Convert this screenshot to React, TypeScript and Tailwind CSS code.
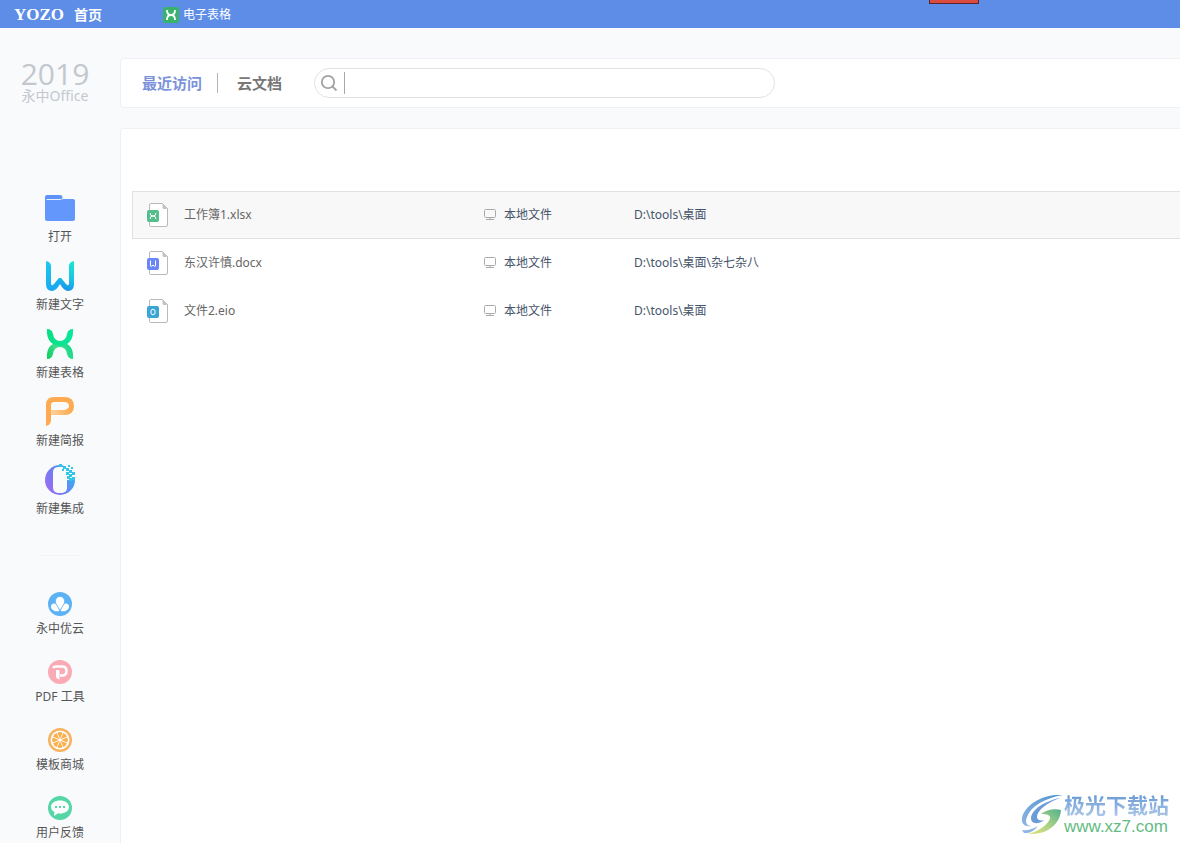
import type { ReactNode } from "react";

function FolderIcon() {
  return (
    <svg width="32" height="32" viewBox="0 0 32 32" aria-hidden="true">
      <path d="M1 5a2 2 0 0 1 2-2h13a2.500 2.500 0 0 1 2.500 2.500V9H1z" fill="#5f93fb" />
      <path d="M2 8h27a2 2 0 0 1 2 2v17a2 2 0 0 1-2 2H3a2 2 0 0 1-2-2V9a1 1 0 0 1 1-1z" fill="#6497fc" />
      <path d="M19 7h10a2 2 0 0 1 2 2v3H17z" fill="#6497fc" />
      <path d="M2.500 7.500h14.500l2-2" stroke="#e6eefe" strokeWidth="1" fill="none" />
    </svg>
  );
}

function WriterIcon() {
  return (
    <svg width="32" height="32" viewBox="0 0 32 32" fill="none" aria-hidden="true">
      <defs>
        <linearGradient id="writerLeft" gradientUnits="userSpaceOnUse" x1="4" y1="2" x2="14" y2="30">
          <stop offset="0" stopColor="#1cc9ea" />
          <stop offset="1" stopColor="#19a5f4" />
        </linearGradient>
        <linearGradient id="writerRight" gradientUnits="userSpaceOnUse" x1="27" y1="2" x2="18" y2="30">
          <stop offset="0" stopColor="#17e6d2" />
          <stop offset="0.600" stopColor="#1bbfe6" />
          <stop offset="1" stopColor="#1590ee" />
        </linearGradient>
      </defs>
      <path d="M2 1q5 1 5 5v17q0 4 3 1l4-5q2-2 4 0l-2 5q-4 7-8 7-6 0-6-7z" fill="url(#writerLeft)" />
      <path d="M30 1q-5 1-5 5v17q0 4-3 1l-4-5q-2-2-4 0l2 5q4 7 8 7 6 0 6-7z" fill="url(#writerRight)" />
    </svg>
  );
}

function SheetIcon() {
  return (
    <svg width="32" height="32" viewBox="0 0 32 32" fill="none" aria-hidden="true">
      <defs>
        <linearGradient id="sheetTop" gradientUnits="userSpaceOnUse" x1="3" y1="0" x2="29" y2="0">
          <stop offset="0" stopColor="#08df82" />
          <stop offset="1" stopColor="#08e79a" />
        </linearGradient>
        <linearGradient id="sheetBottom" gradientUnits="userSpaceOnUse" x1="3" y1="30" x2="28" y2="16">
          <stop offset="0" stopColor="#05d05f" />
          <stop offset="0.500" stopColor="#46dc91" />
          <stop offset="1" stopColor="#0bd988" />
        </linearGradient>
      </defs>
      <path d="M3 31v-5q1-11 13-12 12 1 13 12v5q-5 0-6-5-1-7-7-7t-7 7q-1 5-6 5z" fill="url(#sheetBottom)" />
      <path d="M3 1v4q1 12 13 13 12-1 13-13V1q-5 0-6 5-1 7-7 7T9 6Q8 1 3 1z" fill="url(#sheetTop)" />
    </svg>
  );
}

function SlidesIcon() {
  return (
    <svg width="32" height="32" viewBox="0 0 32 32" aria-hidden="true">
      <defs>
        <linearGradient id="slides" x1="0" y1="0" x2="1" y2="0">
          <stop offset="0" stopColor="#ffd19a" />
          <stop offset="1" stopColor="#fbac54" />
        </linearGradient>
      </defs>
      <path d="M2 9q0-8 8-8h10q10 0 10 9t-10 9H8v-5h12q5 0 5-4t-5-4H10q-3 0-3 3v15q0 5-5 6z" fill="#fdaa50" />
      <path d="M7 14h13q3 0 4-2l3 4q-3 3-7 3H7z" fill="url(#slides)" />
    </svg>
  );
}

const pixels = [
  [15, 0, 3], [19, 2, 3], [24, 1, 2], [22, 4, 3], [27, 3, 2], [18, 5, 2], [25, 6, 3], [28, 8, 3],
  [22, 8, 3], [25, 10, 3], [23, 12, 3], [28, 13, 3], [25, 14, 3],
];

function SuiteIcon() {
  return (
    <svg width="32" height="32" viewBox="0 0 32 32" aria-hidden="true">
      <defs>
        <linearGradient id="suite" gradientUnits="userSpaceOnUse" x1="1" y1="28" x2="31" y2="12">
          <stop offset="0" stopColor="#a56bf0" />
          <stop offset="0.500" stopColor="#6d7df4" />
          <stop offset="1" stopColor="#34b4f2" />
        </linearGradient>
      </defs>
      <path
        fillRule="evenodd"
        d="M16 1A15 15 0 1 0 31 16h-8v8c0 3-2 5-7 5s-7-2-7-6V9c0-5 2-6 7-6h4V1.800z"
        fill="url(#suite)"
      />
      {pixels.map(([x, y, s]) => (
        <rect key={`${x}-${y}`} x={x} y={y} width={s} height={s} fill="#32c7e9" />
      ))}
    </svg>
  );
}

function CloudIcon() {
  return (
    <svg width="24" height="24" viewBox="0 0 24 24" aria-hidden="true">
      <circle cx="12" cy="12" r="12" fill="#5cb2f5" />
      <path d="M11.500 19c-4.500 1-8.500-1-8.500-4.500s4-4 6-1.500z M12.500 19c4.500 1 8.500-1 8.500-4.500s-4-4-6-1.500z" fill="#fff" />
      <path d="M12 4.500c4 0 5.500 4 4 7.500l-4 6.500L8 12c-1.500-3.500 0-7.500 4-7.500z" fill="#fff" stroke="#5cb2f5" strokeWidth="0.800" />
    </svg>
  );
}

function PdfIcon() {
  return (
    <svg width="24" height="24" viewBox="0 0 24 24" fill="none" aria-hidden="true">
      <circle cx="12" cy="12" r="12" fill="#faaab4" />
      <path d="M5 8q1-1.500 3-1.500h6q4.500 0 4.500 4.500T14 15.500h-2" stroke="#fff" strokeWidth="2.500" />
      <path d="M8 10h3.500v9.500Q8 19 8 16z" fill="#fff" />
    </svg>
  );
}

const spokes = [0, 45, 90, 135, 180, 225, 270, 315];

function TemplateIcon() {
  return (
    <svg width="24" height="24" viewBox="0 0 24 24" aria-hidden="true">
      <circle cx="12" cy="12" r="12" fill="#f7b260" />
      <circle cx="12" cy="12" r="9.500" fill="#fff" />
      {spokes.map((angle) => (
        <path
          key={angle}
          d="M12 11L9.400 4.800q2.600-1.600 5.200 0z"
          fill="#f9b050"
          transform={`rotate(${angle} 12 12)`}
        />
      ))}
    </svg>
  );
}

function FeedbackIcon() {
  return (
    <svg width="24" height="24" viewBox="0 0 24 24" aria-hidden="true">
      <circle cx="12" cy="12" r="12" fill="#55d6a5" />
      <path d="M12 4.500c5 0 9 2.500 9 6.500s-4 6.500-9 6.500l-2-.2L6 20l.5-4C4.500 15 3 13.500 3 11c0-4 4-6.500 9-6.500z" fill="#fff" />
      <path d="M7 10h2v2H7zM11 10h2v2h-2zM15 10h2v2h-2z" fill="#55d6a5" />
    </svg>
  );
}

function MiniGlyph({ kind }: { kind: string }) {
  if (kind === "sheet") {
    return <path d="M3 10q0 3 3 3t3-3M3 16q0-3 3-3t3 3" stroke="#fff" strokeWidth="1" fill="none" />;
  }
  if (kind === "doc") {
    return <path d="M3.500 9.500v5.500q1.500 1 2.500-1 1 2 2.500 1V9.500" stroke="#fff" strokeWidth="1" fill="none" />;
  }
  return <ellipse cx="6" cy="13" rx="2.200" ry="2.800" stroke="#fff" strokeWidth="1" fill="none" />;
}

function FileIcon({ kind, color }: { kind: string; color: string }) {
  return (
    <svg width="22" height="24" viewBox="0 0 22 24" className="block" aria-hidden="true">
      <path d="M2.500 22V2A1.500 1.500 0 0 1 4 .5h11.500l5 5V22a1.500 1.500 0 0 1-1.500 1.500H4A1.500 1.500 0 0 1 2.500 22z" fill="#fff" stroke="#bababa" />
      <path d="M15.500.5l5 5.500H17q-1.500 0-1.500-1.500z" fill="#c4c4c4" />
      <rect x="0" y="7" width="12" height="12" rx="2" fill={color} />
      <MiniGlyph kind={kind} />
    </svg>
  );
}

function MonitorIcon() {
  return (
    <svg width="12" height="12" viewBox="0 0 12 12" aria-hidden="true">
      <rect x="0.500" y="0.500" width="11" height="8" rx="1" fill="none" stroke="#aaaaaa" />
      <path d="M2 10.500h8M6 9v1" stroke="#aaaaaa" />
    </svg>
  );
}

const createItems: { label: string; icon: ReactNode }[] = [
  { label: "打开", icon: <FolderIcon /> },
  { label: "新建文字", icon: <WriterIcon /> },
  { label: "新建表格", icon: <SheetIcon /> },
  { label: "新建简报", icon: <SlidesIcon /> },
  { label: "新建集成", icon: <SuiteIcon /> },
];

const serviceItems: { label: string; icon: ReactNode }[] = [
  { label: "永中优云", icon: <CloudIcon /> },
  { label: "PDF 工具", icon: <PdfIcon /> },
  { label: "模板商城", icon: <TemplateIcon /> },
  { label: "用户反馈", icon: <FeedbackIcon /> },
];

const files = [
  { name: "工作簿1.xlsx", kind: "sheet", color: "#54be8a", path: "D:\\tools\\桌面", selected: true },
  { name: "东汉许慎.docx", kind: "doc", color: "#6b86f7", path: "D:\\tools\\桌面\\杂七杂八", selected: false },
  { name: "文件2.eio", kind: "suite", color: "#3ba6d6", path: "D:\\tools\\桌面", selected: false },
];

function TitleBar() {
  return (
    <header className="relative flex h-7 shrink-0 items-center bg-[#5e8de7] pt-px text-white">
      <button className="flex w-[150px] items-center gap-[10px] pl-[14px]">
        <span className="font-['Liberation_Serif',serif] text-[17px] leading-6 font-bold">YOZO</span>
        <span className="text-sm font-bold">首页</span>
      </button>
      <button className="flex items-center gap-1 pl-[13px] text-xs">
        <svg width="16" height="16" viewBox="0 0 16 16" fill="none" aria-hidden="true">
          <rect width="16" height="16" rx="2" fill="#39b36b" />
          <path d="M4 3q0 5 4 5t4-5M4 13q0-5 4-5t4 5" stroke="#fff" strokeWidth="1.800" />
        </svg>
        电子表格
      </button>
      <button aria-label="关闭" className="absolute top-0 right-[201px] h-1 w-[50px] border border-t-0 border-[#5c2430] bg-[#dc4b40]" />
    </header>
  );
}

function Sidebar() {
  return (
    <aside className="flex w-[120px] shrink-0 flex-col text-xs text-[#555555]">
      <div className="flex flex-col items-center pt-8 pr-[10px] text-[#c3c8cf]">
        <span className="font-['Open_Sans','Noto_Sans',sans-serif] text-[30px] leading-7">2019</span>
        <span className="text-sm leading-4">永中Office</span>
      </div>
      <nav className="flex flex-col items-center gap-[14px] pt-22">
        {createItems.map((item) => (
          <button key={item.label} className="flex flex-col items-center gap-1 leading-[18px]">
            {item.icon}
            {item.label}
          </button>
        ))}
      </nav>
      <hr className="mx-auto mt-[37px] w-10 border-[#f3f5f7]" />
      <nav className="flex flex-col items-center gap-[22px] pt-9">
        {serviceItems.map((item) => (
          <button key={item.label} className="flex flex-col items-center gap-1 leading-[18px]">
            {item.icon}
            {item.label}
          </button>
        ))}
      </nav>
    </aside>
  );
}

function Toolbar() {
  return (
    <div className="flex h-[50px] shrink-0 items-center rounded-l border border-r-0 border-[#eef0f3] bg-white pl-[21px]">
      <button className="text-[15px] font-bold text-[#7b92db]">最近访问</button>
      <span className="mx-[15px] h-5 w-px bg-[#b5b5b5]" />
      <button className="ml-1 text-[15px] font-bold text-[#777777]">云文档</button>
      <label className="ml-8 flex h-[30px] w-[461px] items-center rounded-full border border-[#e0e2e5] pl-[5px]">
        <svg width="18" height="18" viewBox="0 0 18 18" fill="none" stroke="#a3a3a3" strokeWidth="1.800" aria-hidden="true">
          <circle cx="8" cy="8" r="6.200" />
          <path d="M12.500 12.500l4 4" />
        </svg>
        <input type="search" aria-label="搜索" className="ml-[6px] h-[22px] min-w-0 flex-1 border-l border-[#a8a8a8] bg-transparent px-2 text-xs outline-none" />
      </label>
    </div>
  );
}

function FileTable() {
  return (
    <table className="w-full table-fixed border-separate border-spacing-0 text-left text-xs">
      <colgroup>
        <col className="w-[52px]" />
        <col className="w-[300px]" />
        <col className="w-[150px]" />
        <col />
      </colgroup>
      <tbody>
        {files.map((file) => (
          <tr
            key={file.name}
            className={
              file.selected
                ? "h-12 bg-[#f8f8f8] *:border-y *:border-[#dfe1e2] *:first:border-l"
                : "h-12 *:border-y *:border-transparent *:first:border-l"
            }
          >
            <td className="p-0 pl-[14px]">
              <FileIcon kind={file.kind} color={file.color} />
            </td>
            <td className="p-0 text-[#666666]">{file.name}</td>
            <td className="p-0 text-[#46546a]">
              <span className="flex items-center gap-2">
                <MonitorIcon />
                本地文件
              </span>
            </td>
            <td className="p-0 text-[#46546a]">{file.path}</td>
          </tr>
        ))}
      </tbody>
    </table>
  );
}

function Watermark() {
  return (
    <div className="absolute right-[11px] bottom-[6px] flex items-center gap-px">
      <svg width="42" height="42" viewBox="0 0 42 42" aria-hidden="true">
        <defs>
          <linearGradient id="swirl" x1="0" y1="1" x2="1" y2="0">
            <stop offset="0" stopColor="#8db4e4" />
            <stop offset="1" stopColor="#4f96cf" />
          </linearGradient>
          <linearGradient id="leaf" x1="0" y1="1" x2="1" y2="0">
            <stop offset="0" stopColor="#e6e27c" />
            <stop offset="0.500" stopColor="#a9d186" />
            <stop offset="1" stopColor="#4fb08e" />
          </linearGradient>
        </defs>
        <path d="M42 0C26-2 4 8 1 23c-1 6 3 9 9 8-5-1-6-4-4-9C10 11 24 3 42 0z" fill="url(#swirl)" />
        <path d="M39 3C24 6 11 14 10 23c0 6 7 7 13 2-4 1-7 0-7-3C16 15 27 7 39 3z" fill="#6b9cd8" />
        <path d="M20 19c5-4 13-6 20-4-1 14-13 25-33 24 8-2 18-7 22-15 1-4-3-5-9-5z" fill="url(#leaf)" />
        <path d="M1 35q8 1 16-4-6 8-14 7z" fill="#8fb5e2" />
      </svg>
      <div className="flex flex-col">
        <span className="bg-linear-to-b from-[#6a9bd4] to-[#a9c6e8] bg-clip-text text-[21px] leading-[21px] font-bold text-transparent">极光下载站</span>
        <span className="font-['Liberation_Sans',sans-serif] text-[17px] leading-[21px] text-[#63bb83]">www.xz7.com</span>
      </div>
    </div>
  );
}

export default function App() {
  return (
    <div className="relative flex min-h-screen flex-col overflow-hidden bg-[#f9fafc] font-['Noto_Sans','Noto_Sans_CJK_SC',sans-serif]">
      <TitleBar />
      <div className="flex flex-1">
        <Sidebar />
        <main className="flex min-w-0 flex-1 flex-col gap-5 pt-[30px]">
          <Toolbar />
          <section className="flex-1 rounded-tl border-t border-l border-[#eef0f3] bg-white pt-[62px] pl-[11px]">
            <FileTable />
          </section>
        </main>
      </div>
      <Watermark />
    </div>
  );
}
